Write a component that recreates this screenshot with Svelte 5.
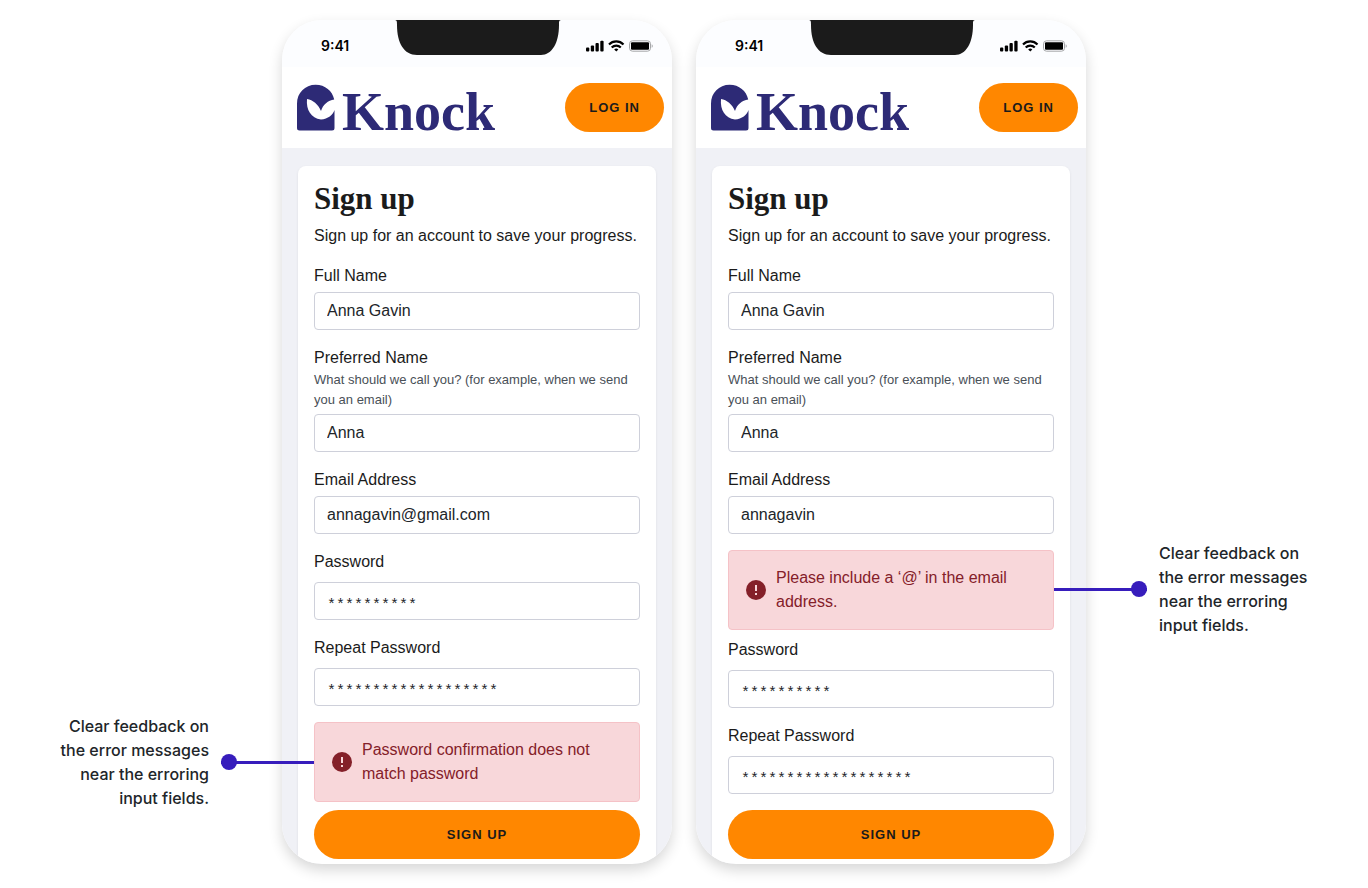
<script lang="ts">
	interface Field {
		id: string;
		label: string;
		value: string;
		hint?: string;
		secret?: boolean;
		error?: string;
	}

	const fullName: Field = { id: 'full-name', label: 'Full Name', value: 'Anna Gavin' };
	const preferredName: Field = {
		id: 'preferred-name',
		label: 'Preferred Name',
		value: 'Anna',
		hint: 'What should we call you? (for example, when we send you an email)'
	};
	const password: Field = { id: 'password', label: 'Password', value: '*'.repeat(10), secret: true };
	const repeat: Field = {
		id: 'repeat-password',
		label: 'Repeat Password',
		value: '*'.repeat(19),
		secret: true
	};

	const screens: Field[][] = [
		[
			fullName,
			preferredName,
			{ id: 'email', label: 'Email Address', value: 'annagavin@gmail.com' },
			password,
			{ ...repeat, error: 'Password confirmation does not match password' }
		],
		[
			fullName,
			preferredName,
			{
				id: 'email',
				label: 'Email Address',
				value: 'annagavin',
				error: 'Please include a ‘@’ in the email address.'
			},
			password,
			repeat
		]
	];
</script>

{#snippet callout(side: string)}
	<aside class="callout {side}">
		<p>Clear feedback on the error messages near the erroring input fields.</p>
		<span class="connector"></span>
	</aside>
{/snippet}

<main class="board">
	{@render callout('left')}

	{#each screens as fields, i}
		<section class="phone">
			<div class="status-bar">
				<span class="time">9:41</span>
				<svg class="notch" width="170" height="35" viewBox="0 0 170 35" aria-hidden="true">
					<path d="M2 0H170C167 0 167 1 167 5C167 23 160 35 149 35H25C12 35 5 23 5 5C5 1 5 0 2 0Z" fill="#1b1b1b" />
				</svg>
				<svg class="indicators" width="67" height="12" viewBox="0 0 67 12" aria-hidden="true">
					<rect x="0" y="7.500" width="3.300" height="4" rx="1" />
					<rect x="4.800" y="5.500" width="3.300" height="6" rx="1" />
					<rect x="9.500" y="3" width="3.300" height="8.500" rx="1" />
					<rect x="14.300" y="0.700" width="3.300" height="10.800" rx="1" />
					<g fill="none" stroke="#000" stroke-width="2.200">
						<path d="M23 4.500C27 0.400 33.500 0.400 37.500 4.500" />
						<path d="M25.700 7.500C28.300 4.900 32.200 4.900 34.800 7.500" />
					</g>
					<path d="M28.200 9.400C29.400 8.300 31.100 8.300 32.300 9.400L30.250 11.500Z" />
					<rect x="43.500" y="0.800" width="21" height="10.400" rx="3" fill="none" stroke="#a5a6a8" />
					<rect x="45" y="2.300" width="18" height="7.400" rx="1" />
					<path d="M65.700 4.300C67.100 4.900 67.100 7.200 65.700 7.800Z" fill="#a5a6a8" />
				</svg>
			</div>

			<header class="site-header">
				<a class="brand" href="/">
					<svg width="38" height="47" viewBox="0 0 38 47" aria-hidden="true">
						<path
							d="M0 19.500C0 9 8 0.800 18.700 0.800C28 0.800 35.500 7 37.200 15.500C31 16.500 26 20.500 24 27C21 20 16 16 10 15C9 26 14 34 24 35.500C31 35 36 31 37.500 26V44Q37.500 46.500 35 46.500H2.500Q0 46.500 0 44Z"
							fill="#2d2a76"
						/>
					</svg>
					<span>Knock</span>
				</a>
				<button class="pill" type="button">Log in</button>
			</header>

			<div class="content">
				<form class="card">
					<h1>Sign up</h1>
					<p class="intro">Sign up for an account to save your progress.</p>

					{#each fields as field}
						<div class="field" class:secret={field.secret}>
							<label for="{field.id}-{i}">{field.label}</label>
							{#if field.hint}
								<small id="{field.id}-hint-{i}">{field.hint}</small>
							{/if}
							<input
								id="{field.id}-{i}"
								type="text"
								value={field.value}
								autocomplete="off"
								spellcheck="false"
								aria-describedby={field.hint ? `${field.id}-hint-${i}` : undefined}
								aria-invalid={field.error ? 'true' : undefined}
							/>
						</div>
						{#if field.error}
							<div class="alert" role="alert">
								<svg width="24" height="24" viewBox="0 0 24 24" aria-hidden="true">
									<circle cx="12" cy="12" r="10" fill="#842029" />
									<path d="M12 7V13M12 15V17" stroke="#f8d7da" stroke-width="2" />
								</svg>
								<span>{field.error}</span>
							</div>
						{/if}
					{/each}

					<button class="pill submit" type="button">Sign up</button>
				</form>
			</div>
		</section>
	{/each}

	{@render callout('right')}
</main>

<style>
	:global(body) {
		margin: 0;
		background: #fff;
	}

	.board {
		display: flex;
		padding: 20px 0 24px;
		font-family: 'Liberation Sans', Arial, sans-serif;
		font-size: 16px;
		line-height: 24px;
		color: #1b1b1b;
	}

	.phone {
		flex: 0 1 390px;
		min-width: 0;
		border-radius: 40px;
		overflow: hidden;
		background: #fff;
		box-shadow: 0 6px 14px rgba(0, 0, 0, 0.16);
	}

	.phone + .phone {
		margin-left: 24px;
	}

	/* Status bar */
	.status-bar {
		display: grid;
		grid-template-columns: 1fr auto 1fr;
		height: 47px;
		background: #fcfdff;
	}

	.time {
		padding: 14px 0 0 39px;
		font-family: Inter, sans-serif;
		font-size: 14px;
		font-weight: 600;
		color: #000;
	}

	.indicators {
		justify-self: end;
		margin: 20px 19px 0 0;
	}

	/* Site header */
	.site-header {
		display: flex;
		align-items: center;
		justify-content: space-between;
		box-sizing: border-box;
		height: 81px;
		padding: 0 8px 0 15px;
	}

	.brand {
		display: flex;
		align-items: flex-end;
		gap: 7px;
		font-family: 'Liberation Serif', serif;
		font-size: 54px;
		font-weight: 700;
		line-height: 37px;
		color: #2d2a76;
		text-decoration: none;
	}

	.pill {
		padding: 12px 24px;
		border: none;
		border-radius: 25px;
		background: #ff8700;
		font-family: 'Liberation Sans', Arial, sans-serif;
		font-size: 13px;
		font-weight: 700;
		line-height: 25px;
		letter-spacing: 1px;
		text-transform: uppercase;
		color: #1b1b1b;
		cursor: pointer;
	}

	.submit {
		width: 100%;
	}

	/* Form */
	.content {
		padding: 18px 16px 0;
		background: #f0f1f6;
	}

	.card {
		padding: 16px 16px 5px;
		border-radius: 8px 8px 0 0;
		background: #fff;
		box-shadow: 0 1px 3px rgba(0, 0, 0, 0.08);
	}

	h1 {
		margin: 0 0 8px;
		font-family: 'Liberation Serif', serif;
		font-size: 31px;
		line-height: 34px;
	}

	.intro {
		margin: 0 0 16px;
	}

	.field {
		display: flex;
		flex-direction: column;
		margin-bottom: 16px;
	}

	small {
		font-size: 13px;
		line-height: 20px;
		color: #495057;
	}

	input {
		box-sizing: border-box;
		width: 100%;
		height: 38px;
		margin-top: 4px;
		padding: 0 12px;
		border: 1px solid #ced0da;
		border-radius: 4px;
		background: #fff;
		font: inherit;
		color: #212529;
	}

	.secret input {
		margin-top: 8px;
		padding-top: 8px;
		font-family: 'Liberation Mono', monospace;
		font-size: 15px;
	}

	.alert {
		display: flex;
		align-items: center;
		gap: 8px;
		margin-bottom: 8px;
		padding: 15px;
		border: 1px solid #f5c2c7;
		border-radius: 4px;
		background: #f8d7da;
		color: #842029;
	}

	.alert svg {
		flex: none;
	}

	/* Callouts beside the phones, their lines reach in to the alerts */
	.callout {
		position: relative;
		z-index: 1;
		display: flex;
		flex: 1;
		align-items: center;
		gap: 12px;
		font-family: Inter, sans-serif;
		font-weight: 500;
		color: #212529;
	}

	.callout p {
		width: 152px;
		margin: 0;
	}

	.left {
		align-self: flex-end;
		justify-content: flex-end;
		margin: 0 -32px 54px 0;
		text-align: right;
	}

	.right {
		align-self: flex-start;
		flex-direction: row-reverse;
		justify-content: flex-end;
		margin: 521px 0 0 -32px;
	}

	.connector {
		display: flex;
		align-items: center;
		width: 93px;
		height: 16px;
		background: linear-gradient(#371dbc, #371dbc) center / 100% 3px no-repeat;
	}

	.connector::before {
		content: '';
		width: 16px;
		height: 16px;
		border-radius: 50%;
		background: #371dbc;
	}

	.right .connector {
		justify-content: flex-end;
	}
</style>
